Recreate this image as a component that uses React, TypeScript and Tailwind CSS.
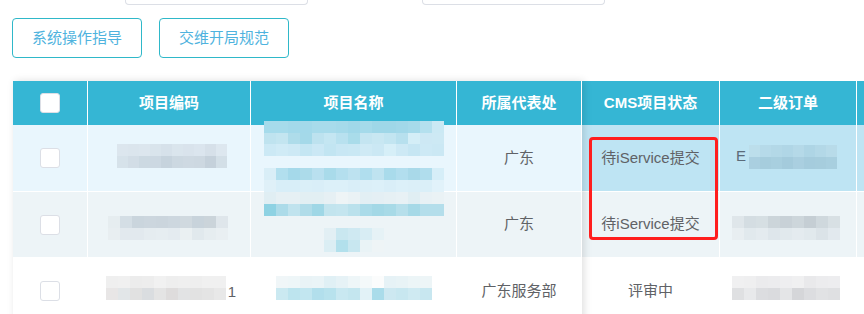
import React from 'react';

type Grid = string[][];

// pixelated redaction blocks, cells are 12px unless told otherwise
function Mosaic({ rows, cell = 'w-3 h-3' }: { rows: Grid; cell?: string }) {
  return (
    <div className="flex flex-col">
      {rows.map((r, i) => (
        <div key={i} className="flex">
          {r.map((c, j) => (
            <div key={j} className={`${cell} ${c}`} />
          ))}
        </div>
      ))}
    </div>
  );
}

const codeRow1: Grid = [
  ['bg-[#dce6ee]', 'bg-[#dbe5ed]', 'bg-[#dce6ee]', 'bg-[#d9e4ec]', 'bg-[#d6e1ea]', 'bg-[#dae5ed]', 'bg-[#d9e3ec]', 'bg-[#dbe5ee]', 'bg-[#d6e0e9]', 'bg-[#dde7ef]'],
  ['bg-[#d6e2ea]', 'bg-[#d2dde6]', 'bg-[#ccd9e2]', 'bg-[#ccd8e2]', 'bg-[#c6d3dd]', 'bg-[#ccd8e1]', 'bg-[#ced9e2]', 'bg-[#cdd8e1]', 'bg-[#c5d1db]', 'bg-[#d3dfe7]'],
];
const codeRow2: Grid = [
  ['bg-[#e6edf0]', 'bg-[#d4dee5]', 'bg-[#cad5dd]', 'bg-[#ccd6de]', 'bg-[#cbd5dd]', 'bg-[#cdd7df]', 'bg-[#d0d9df]', 'bg-[#c8d3db]', 'bg-[#cbd4da]', 'bg-[#dfe6eb]'],
  ['bg-[#e8eef1]', 'bg-[#e2e9ee]', 'bg-[#e2e9ee]', 'bg-[#e5ecf0]', 'bg-[#e6edf1]', 'bg-[#e4ebf0]', 'bg-[#eaf0f2]', 'bg-[#e1e9ed]', 'bg-[#e6edf0]', 'bg-[#e9eff2]'],
];
const codeRow3: Grid = [
  ['bg-[#efefef]', 'bg-[#f0f0f0]', 'bg-[#ececec]', 'bg-[#ededed]', 'bg-[#f1f1f1]', 'bg-[#eeeeee]', 'bg-[#efefef]', 'bg-[#eeeeee]', 'bg-[#f0f0f0]', 'bg-[#f0f0f0]'],
  ['bg-[#e8e6e6]', 'bg-[#e2e6e8]', 'bg-[#e1e1e1]', 'bg-[#dadde0]', 'bg-[#e4e4e4]', 'bg-[#dedcdc]', 'bg-[#e2e3e4]', 'bg-[#e2e2e2]', 'bg-[#e4e4e4]', 'bg-[#e8e8e8]'],
];

const orderRow1: Grid = [
  ['bg-[#bcdeeb]', 'bg-[#b6dae9]', 'bg-[#b3d8e7]', 'bg-[#b0d6e6]', 'bg-[#b5d9e8]', 'bg-[#aed5e5]', 'bg-[#b3d8e7]', 'bg-[#b8dbe9]'],
  ['bg-[#aacfe0]', 'bg-[#a6cddd]', 'bg-[#a8cfdf]', 'bg-[#a4cbdc]', 'bg-[#aacfe0]', 'bg-[#a5ccdd]', 'bg-[#a6cddd]', 'bg-[#a8cfdf]'],
];
const orderRow2: Grid = [
  ['bg-[#dfe6ea]', 'bg-[#d4dde2]', 'bg-[#d6dfe3]', 'bg-[#ccd5da]', 'bg-[#c8d1d7]', 'bg-[#cdd6db]', 'bg-[#c5ced4]', 'bg-[#cfd8dd]', 'bg-[#d8e0e4]'],
  ['bg-[#e8eef1]', 'bg-[#e1e9ed]', 'bg-[#e4ebef]', 'bg-[#dee6eb]', 'bg-[#e1e9ed]', 'bg-[#e4ebef]', 'bg-[#e1e9ed]', 'bg-[#dbe3e8]', 'bg-[#e2e9ee]'],
];
const orderRow3: Grid = [
  ['bg-[#f0f0f1]', 'bg-[#efeff0]', 'bg-[#ebebed]', 'bg-[#ececee]', 'bg-[#eeeef0]', 'bg-[#f0f0f1]', 'bg-[#e9e9eb]', 'bg-[#ececee]', 'bg-[#ededef]'],
  ['bg-[#dfe0e2]', 'bg-[#e8e9eb]', 'bg-[#dcdde0]', 'bg-[#dadbde]', 'bg-[#e4e5e7]', 'bg-[#d5d6d9]', 'bg-[#dcdde0]', 'bg-[#e1e2e4]', 'bg-[#dfe0e2]'],
];

// project-name redaction, spills over row borders
const nameA: Grid = [
  ['bg-[#a6dbeb]', 'bg-[#a6dbeb]', 'bg-[#a3d9ea]', 'bg-[#a3d9ea]', 'bg-[#a8dbeb]', 'bg-[#a8dbeb]', 'bg-[#a5daea]', 'bg-[#a0d8e9]', 'bg-[#a5daea]', 'bg-[#9fd7e8]', 'bg-[#9fd7e8]', 'bg-[#a2d8e9]', 'bg-[#a6daea]', 'bg-[#b4e0ee]', 'bg-[#cbe9f4]'],
  ['bg-[#bfe3ef]', 'bg-[#c3e5f0]', 'bg-[#aedcea]', 'bg-[#a4d9e9]', 'bg-[#bde2ef]', 'bg-[#c4e6f2]', 'bg-[#b8e1ef]', 'bg-[#a9dcea]', 'bg-[#c4e5f1]', 'bg-[#c8e7f2]', 'bg-[#c2e5f1]', 'bg-[#b7e0ee]', 'bg-[#d4eef7]', 'bg-[#cde8f4]', 'bg-[#cde9f4]'],
  ['bg-[#cce9f5]', 'bg-[#d0ebf6]', 'bg-[#cde9f5]', 'bg-[#c4e6f3]', 'bg-[#cbe8f5]', 'bg-[#c2e5f2]', 'bg-[#c8e7f4]', 'bg-[#c9e8f4]', 'bg-[#cfeaf5]', 'bg-[#cbe8f4]', 'bg-[#d6eff8]', 'bg-[#cde9f5]', 'bg-[#c6e6f3]', 'bg-[#cde9f5]', 'bg-[#cbe8f4]'],
];
const nameB: Grid = [
  ['bg-[#d9eef7]', 'bg-[#b2dfee]', 'bg-[#a5d9ea]', 'bg-[#acdbea]', 'bg-[#b9e0ef]', 'bg-[#a9dbea]', 'bg-[#b4dfee]', 'bg-[#bde2f0]', 'bg-[#b0deee]', 'bg-[#bfe3f0]', 'bg-[#a9dbeb]', 'bg-[#b2deee]', 'bg-[#a9d9e9]', 'bg-[#b0dded]', 'bg-[#d6eef8]'],
  ['bg-[#dff0f8]', 'bg-[#d8eef8]', 'bg-[#d8eef8]', 'bg-[#daeff8]', 'bg-[#d9eef8]', 'bg-[#dcf0f9]', 'bg-[#dcf0f9]', 'bg-[#d9eef8]', 'bg-[#dbeff8]', 'bg-[#dcf0f9]', 'bg-[#d9eef8]', 'bg-[#dcf0f9]', 'bg-[#dbeff8]', 'bg-[#daeff8]', 'bg-[#e1f2fa]'],
  ['bg-[#e0eef3]', 'bg-[#e6f0f4]', 'bg-[#e6f0f4]', 'bg-[#e2eff3]', 'bg-[#e2eff3]', 'bg-[#e6f0f4]', 'bg-[#eef4f6]', 'bg-[#eaf2f5]', 'bg-[#e2eff4]', 'bg-[#e4eff4]', 'bg-[#e6f0f4]', 'bg-[#e8f1f5]', 'bg-[#e0eef3]', 'bg-[#e8f1f5]', 'bg-[#eaf2f5]'],
  ['bg-[#8ed2e3]', 'bg-[#acdbe9]', 'bg-[#c0e3ee]', 'bg-[#b0dce9]', 'bg-[#9fd7e6]', 'bg-[#c2e4ee]', 'bg-[#c4e5ef]', 'bg-[#bae1ec]', 'bg-[#aadbe9]', 'bg-[#a3d8e6]', 'bg-[#a8dae7]', 'bg-[#b6dfeb]', 'bg-[#a6d9e7]', 'bg-[#b4deeb]', 'bg-[#b4deeb]'],
];
const nameC: Grid = [
  ['bg-[#e2eff4]', 'bg-[#c9e7f0]', 'bg-[#cfe9f2]', 'bg-[#d8edf4]', 'bg-[#e6f2f6]'],
  ['bg-[#dbeef4]', 'bg-[#b2e0ec]', 'bg-[#c8e7f0]', 'bg-[#e9f3f6]', 'bg-[#eef4f6]'],
];
const nameD: Grid = [
  ['bg-[#f0f6f8]', 'bg-[#eef6f8]', 'bg-[#e9f3f6]', 'bg-[#eaf4f7]', 'bg-[#e0f0f5]', 'bg-[#e6f2f6]', 'bg-[#eef6f8]', 'bg-[#f4f9fa]', 'bg-[#fbfcfc]', 'bg-[#e6f2f6]', 'bg-[#e8f3f6]', 'bg-[#ecf5f7]', 'bg-[#edf5f7]'],
  ['bg-[#cbe9f1]', 'bg-[#bde4ee]', 'bg-[#c2e6f0]', 'bg-[#b2dfec]', 'bg-[#b8e2ed]', 'bg-[#c9e8f1]', 'bg-[#c4e6ef]', 'bg-[#e2f2f7]', 'bg-[#aadcea]', 'bg-[#cde8f1]', 'bg-[#c8e7f0]', 'bg-[#cfeaf2]', 'bg-[#c8e7f0]'],
];

function Checkbox() {
  return <div className="w-5 h-5 rounded-[3px] border border-[#dcdfe6] bg-white" />;
}

const th = 'h-[44px] flex items-center justify-center border-r border-white font-bold text-white';

export default function App() {
  return (
    <div className="w-[864px] h-[314px] overflow-hidden bg-white font-['Liberation_Sans','Noto_Sans_CJK_SC',sans-serif] text-[15px] text-[#606266]">
      {/* search inputs, scrolled off the top */}
      <div className="flex h-[5px]">
        <div className="ml-[125px] w-[183px] h-[5px] border-x border-b border-[#dcdfe6] rounded-b-[4px]" />
        <div className="ml-[114px] w-[183px] h-[5px] border-x border-b border-[#dcdfe6] rounded-b-[4px]" />
      </div>

      <div className="flex gap-[17px] ml-[12px] mt-[13px]">
        <button className="w-[130px] h-[40px] rounded-[4px] border border-[#2fb8c9] text-[#4fb3de]">系统操作指导</button>
        <button className="w-[130px] h-[40px] rounded-[4px] border border-[#2fb8c9] text-[#4fb3de]">交维开局规范</button>
      </div>

      <div className="relative ml-[13px] mt-[23px] flex">
        {/* fixed left columns */}
        <div className="relative z-10 w-[569px] shrink-0 shadow-[2px_0_8px_rgba(0,0,0,0.13)]">
          <div className="flex bg-[#35b6d4]">
            <div className={`${th} w-[75px]`}>
              <Checkbox />
            </div>
            <div className={`${th} w-[163px]`}>项目编码</div>
            <div className={`${th} w-[206px]`}>项目名称</div>
            <div className={`${th} w-[125px]`}>所属代表处</div>
          </div>

          <div className="flex h-[67px] bg-[#e9f6fd] border-b border-white">
            <div className="w-[75px] flex items-center justify-center border-r border-white">
              <Checkbox />
            </div>
            <div className="w-[163px] flex items-center justify-center pl-[6px] pb-[4px] border-r border-white">
              <Mosaic rows={codeRow1} cell="w-[11px] h-3" />
            </div>
            <div className="w-[206px] border-r border-white" />
            <div className="w-[125px] flex items-center justify-center border-r border-white">广东</div>
          </div>

          <div className="flex h-[66px] bg-[#edf4f7] border-b border-white">
            <div className="w-[75px] flex items-center justify-center border-r border-white">
              <Checkbox />
            </div>
            <div className="w-[163px] flex items-center justify-center pt-[6px] pr-[2px] border-r border-white">
              <Mosaic rows={codeRow2} />
            </div>
            <div className="w-[206px] border-r border-white" />
            <div className="w-[125px] flex items-center justify-center border-r border-white">广东</div>
          </div>

          <div className="flex h-[66px] bg-white">
            <div className="w-[75px] flex items-center justify-center border-r border-white">
              <Checkbox />
            </div>
            <div className="w-[163px] flex items-center justify-center pb-[6px] pl-[4px] border-r border-white">
              <div className="flex items-end">
                <Mosaic rows={codeRow3} />
                <span className="leading-[17px] ml-[2px]">1</span>
              </div>
            </div>
            <div className="w-[206px] border-r border-white" />
            <div className="w-[125px] flex items-center justify-center border-r border-white">广东服务部</div>
          </div>
        </div>

        {/* scrolling columns */}
        <div className="w-[400px] shrink-0">
          <div className="flex bg-[#35b6d4]">
            <div className={`${th} w-[138px]`}>CMS项目状态</div>
            <div className={`${th} w-[137px]`}>二级订单</div>
            <div className={`${th} w-[120px]`} />
          </div>

          <div className="flex h-[67px] bg-[#bee4f3] border-b border-white">
            <div className="w-[138px] flex items-center justify-center border-r border-white">待iService提交</div>
            <div className="w-[137px] flex items-center pl-[16px] pb-[3px] border-r border-white">
              <span className="text-[#5b6b7a]">E</span>
              <div className="ml-[3px]">
                <Mosaic rows={orderRow1} cell="w-[11px] h-3" />
              </div>
            </div>
            <div className="w-[120px] border-r border-white" />
          </div>

          <div className="flex h-[66px] bg-[#edf4f7] border-b border-white">
            <div className="w-[138px] flex items-center justify-center border-r border-white">待iService提交</div>
            <div className="w-[137px] flex items-center pl-[12px] pt-[6px] border-r border-white">
              <Mosaic rows={orderRow2} />
            </div>
            <div className="w-[120px] border-r border-white" />
          </div>

          <div className="flex h-[66px] bg-white">
            <div className="w-[138px] flex items-center justify-center border-r border-white">评审中</div>
            <div className="w-[137px] flex items-center pl-[12px] pb-[6px] border-r border-white">
              <Mosaic rows={orderRow3} />
            </div>
            <div className="w-[120px] border-r border-[#f0f0f0]" />
          </div>
        </div>

        {/* redaction over the project names */}
        <div className="absolute z-20 left-[251px] top-[40px]">
          <Mosaic rows={nameA} cell="w-3 h-[11.7px]" />
        </div>
        <div className="absolute z-20 left-[251px] top-[87px]">
          <Mosaic rows={nameB} />
        </div>
        <div className="absolute z-20 left-[311px] top-[147px]">
          <Mosaic rows={nameC} />
        </div>
        <div className="absolute z-20 left-[263px] top-[195px]">
          <Mosaic rows={nameD} />
        </div>

        {/* review annotation */}
        <div className="absolute z-20 left-[576px] top-[56px] w-[129px] h-[103px] rounded-[4px] border-[3px] border-[#ff1e1e]" />
      </div>
    </div>
  );
}
